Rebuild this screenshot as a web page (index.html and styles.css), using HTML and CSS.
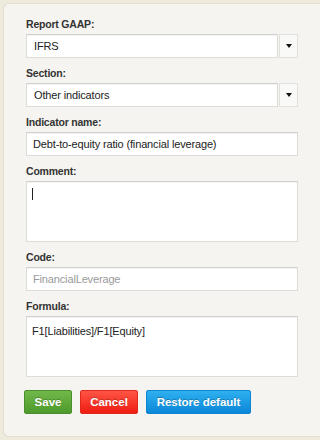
FILE: index.html
```html
<!DOCTYPE html>
<html>
<head>
<meta charset="utf-8">
<link rel="stylesheet" href="styles.css">
</head>
<body>
<div class="panel">
  <div class="field">
    <div class="label">Report GAAP:</div>
    <div class="select-row">
      <div class="box select">IFRS</div>
      <div class="dd"><span class="caret-down"></span></div>
    </div>
  </div>
  <div class="field">
    <div class="label">Section:</div>
    <div class="select-row">
      <div class="box select">Other indicators</div>
      <div class="dd"><span class="caret-down"></span></div>
    </div>
  </div>
  <div class="field">
    <div class="label">Indicator name:</div>
    <div class="box input">Debt-to-equity ratio (financial leverage)</div>
  </div>
  <div class="field">
    <div class="label">Comment:</div>
    <div class="box area"><span class="cursor"></span></div>
  </div>
  <div class="field">
    <div class="label">Code:</div>
    <div class="box input placeholder">FinancialLeverage</div>
  </div>
  <div class="field">
    <div class="label">Formula:</div>
    <div class="box area">F1[Liabilities]/F1[Equity]</div>
  </div>
  <div class="buttons">
    <button class="btn save">Save</button>
    <button class="btn cancel">Cancel</button>
    <button class="btn restore">Restore default</button>
  </div>
</div>
</body>
</html>
```
FILE: styles.css
```css
html, body {
  margin: 0;
  padding: 0;
  background: #eeebdc;
  font-family: "Liberation Sans", Arial, sans-serif;
  font-size: 11px;
  color: #333;
}
.panel {
  margin: 3px 0 0 3px;
  height: 434px;
  background: #f5f4f0;
  border: 1px solid #e3e0cf;
  border-right: none;
  border-radius: 6px 0 0 6px;
  padding: 12px 0 0 22px;
  box-sizing: border-box;
}
.field {
  width: 272px;
  margin-bottom: 7px;
}
.label {
  font-weight: bold;
  font-size: 10.5px;
  letter-spacing: -0.2px;
  line-height: 16px;
  margin-bottom: 2px;
  color: #333;
}
.box {
  background: #fff;
  border: 1px solid #dedcd6;
  border-top-color: #d2d0ca;
  box-shadow: inset 0 1px 1px rgba(0,0,0,0.05);
  box-sizing: border-box;
  padding: 0 6px;
  color: #222;
  font-size: 11px;
  letter-spacing: -0.15px;
}
.input, .select {
  height: 24px;
  line-height: 22px;
}
.select {
  padding-left: 7px;
}
.select-row {
  display: flex;
  gap: 1px;
}
.select {
  flex: 1;
}
.dd {
  width: 19px;
  height: 24px;
  box-sizing: border-box;
  background: #f9f9f7;
  border: 1px solid #e3e1db;
  display: flex;
  align-items: center;
  justify-content: center;
}
.caret-down {
  width: 0;
  height: 0;
  border-left: 3px solid transparent;
  border-right: 3px solid transparent;
  border-top: 4px solid #111;
}
.area {
  height: 61px;
  padding: 7px 5px;
  line-height: 14px;
}
.cursor {
  display: inline-block;
  width: 1px;
  height: 12px;
  background: #222;
  margin-top: -1px;
  vertical-align: top;
}
.placeholder {
  color: #9a9a9a;
}
.buttons {
  display: flex;
  gap: 8px;
  margin: 13px 0 0 -2px;
}
.btn {
  height: 24px;
  padding: 0;
  border-radius: 2px;
  font-family: "Liberation Sans", Arial, sans-serif;
  font-weight: bold;
  font-size: 11.5px;
  color: #fff;
  text-shadow: 0 -1px 0 rgba(0,0,0,0.25);
  box-sizing: border-box;
  cursor: pointer;
}
.save {
  width: 48px;
  background: linear-gradient(#71b84a, #4e9a2c);
  border: 1px solid #4a8f2b;
}
.cancel {
  width: 58px;
  background: linear-gradient(#ff5546, #ee1c10);
  border: 1px solid #e0281c;
}
.restore {
  width: 105px;
  background: linear-gradient(#2fb0f0, #0a87d8);
  border: 1px solid #0d86cf;
}
```
